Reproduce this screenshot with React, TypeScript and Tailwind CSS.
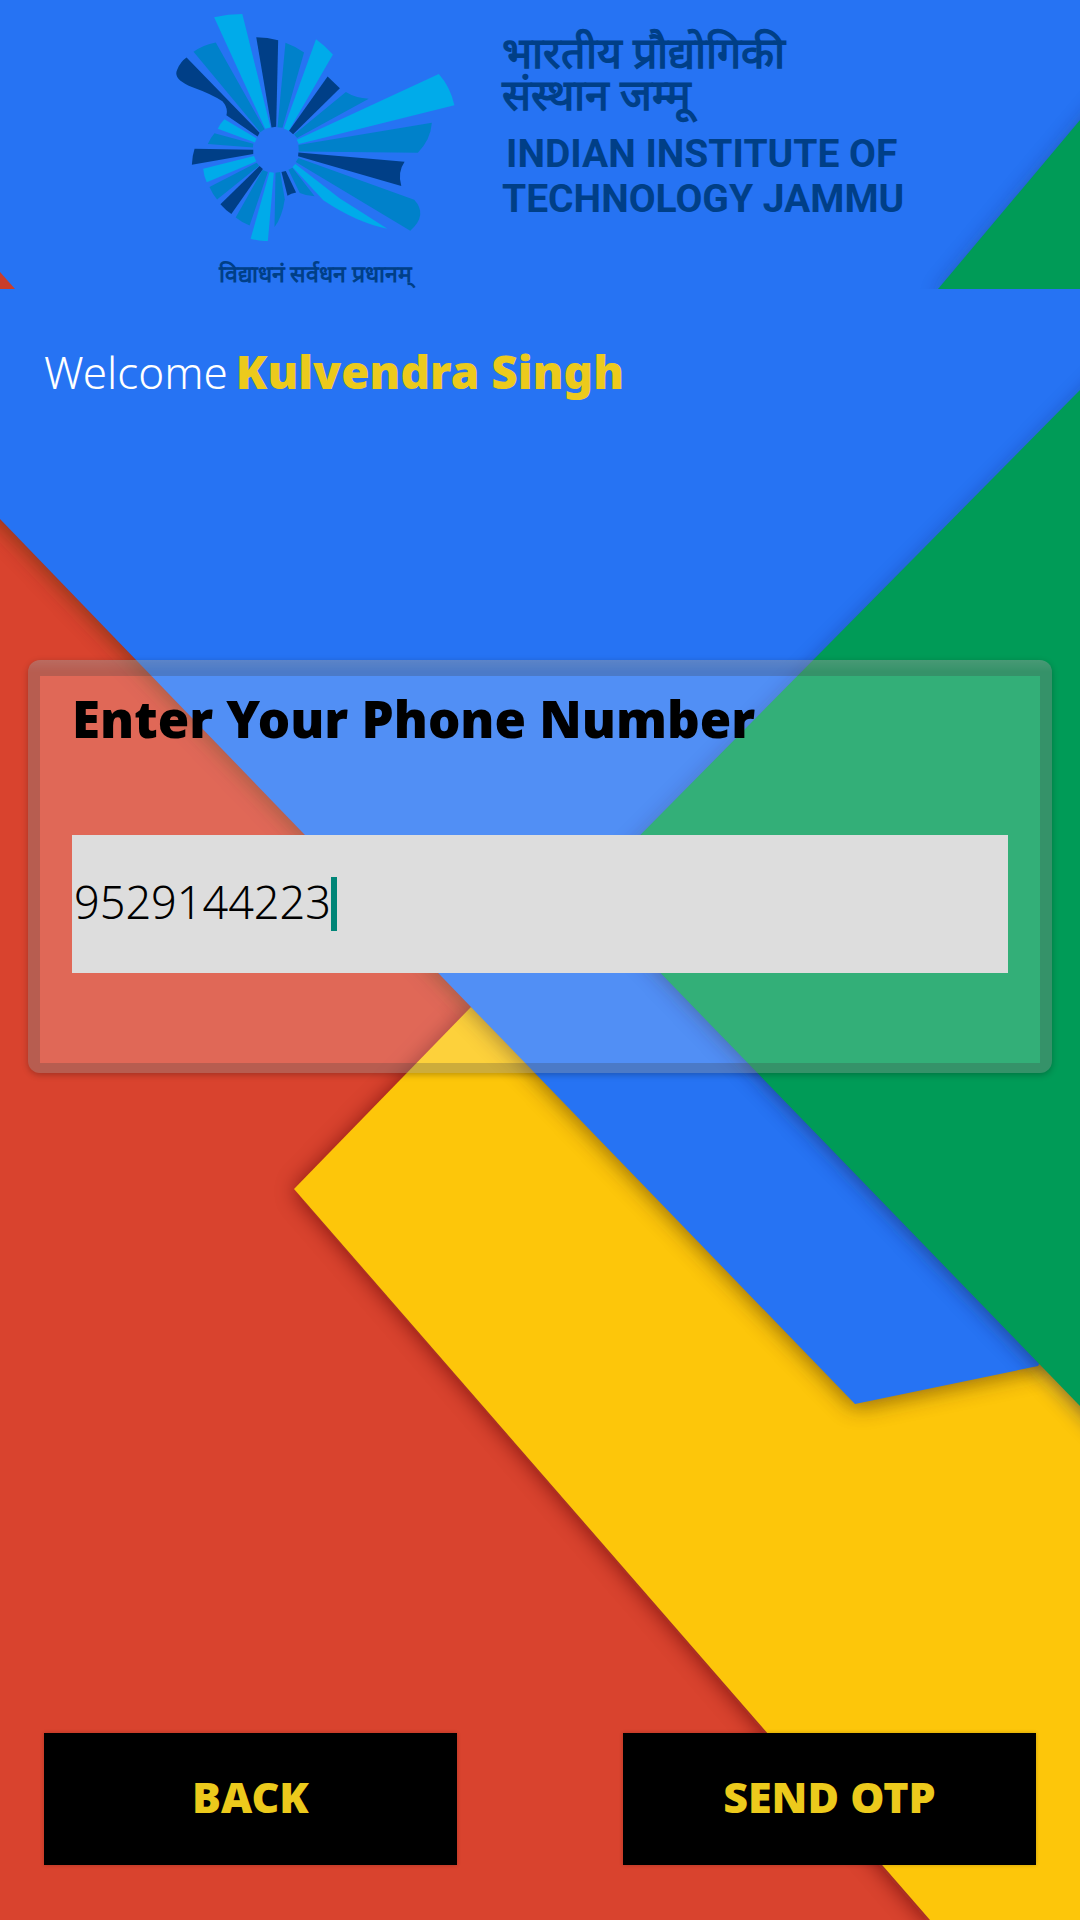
import React, { useState } from 'react';

function Wallpaper() {
  return (
    <svg
      aria-hidden="true"
      className="absolute inset-0 h-full w-full"
      viewBox="0 0 1080 1920"
      preserveAspectRatio="none"
    >
      <defs>
        <filter id="soft" x="-10%" y="-10%" width="120%" height="120%">
          <feGaussianBlur stdDeviation="11" />
        </filter>
      </defs>
      <rect width="1080" height="1920" fill="#d9432e" />
      <path d="M471 1009L294 1191L930 1924H1200V1100Z" fill="#5c0a10" opacity="0.7" filter="url(#soft)" />
      <path d="M471 1007L294 1189L930 1920H1080V1300Z" fill="#fdc60a" />
      <path d="M-60 460L855 1408L1045 1368V-60H-60Z" fill="#4a2a10" opacity="0.6" filter="url(#soft)" />
      <path d="M0 519L471 1007L855 1404L1038 1366L1080 1300V0H0Z" fill="#2673f3" />
      <path d="M1140 342L587 897L1140 1470Z" fill="#1c2350" opacity="0.65" filter="url(#soft)" />
      <path d="M1080 390L583 893L1080 1406Z" fill="#009b57" />
    </svg>
  );
}

function HeaderBackdrop() {
  return (
    <svg
      aria-hidden="true"
      className="absolute inset-0 h-full w-full"
      viewBox="0 0 1080 289"
      preserveAspectRatio="none"
    >
      <rect width="1080" height="289" fill="#2673f3" />
      <path d="M0 272L15 289H0Z" fill="#c93d2b" />
      <path d="M1140 56L936 299H1140Z" fill="#1c2350" opacity="0.45" filter="url(#soft)" />
      <path d="M1080 120L938 289H1080Z" fill="#009b57" />
    </svg>
  );
}

function Emblem() {
  return (
    <svg role="img" aria-label="IIT Jammu emblem" className="h-[228px] w-[279px]" viewBox="48 42 837 684">
      <g fill="#00abea">
        <path d="M161 52Q203 42 246 42L331 384L315 388Z" />
        <path d="M468 118Q496 138 519 164L386 394L371 387Z" />
        <path d="M838 223Q873 262 885 317L416 434L410 421Z" />
        <path d="M192 359L289 417L284 429L172 388Q179 372 192 359Z" />
        <path d="M128 508L281 470L288 486L139 549Q130 530 128 508Z" />
        <path d="M328 518L341 520L323 726Q298 727 271 719Z" />
        <path d="M397 503L406 494L540 598Q610 642 683 689Q590 670 490 603Z" />
      </g>
      <g fill="#0081ca">
        <path d="M99 156Q128 135 166 128L313 389L300 398Z" />
        <path d="M376 129Q406 140 432 158L367 385L352 383Z" />
        <path d="M558 277Q588 296 627 297L411 416L402 405Z" />
        <path d="M817 370Q814 420 775 460L416 456L415 437Z" />
        <path d="M162 401L279 433L278 444L142 434Q149 416 162 401Z" />
        <path d="M147 563L289 490L297 499L170 601Q156 584 147 563Z" />
        <path d="M307 512L323 518L268 679Q246 671 226 655Z" />
        <path d="M346 520L360 518L374 600Q366 654 343 684Z" />
        <path d="M385 511L397 505L464 591Q440 590 419 581Z" />
        <path d="M415 476L764 602Q806 648 752 695L407 488Z" />
      </g>
      <g fill="#003f87">
        <path d="M78 173L298 400L292 411L198 347Q204 325 186 305Q155 284 94 262Q35 238 50 209Q60 185 78 173Z" />
        <path d="M288 112Q322 112 354 121L348 382L334 384Z" />
        <path d="M503 230L540 266L399 404L387 394Z" />
        <path d="M415 459L735 487Q713 518 725 560L414 471Z" />
        <path d="M102 448L279 451L279 464L94 496Q95 469 102 448Z" />
        <path d="M298 500L308 509L213 645Q195 632 180 615Z" />
        <path d="M364 518L377 515L408 580Q393 583 382 590Z" />
      </g>
    </svg>
  );
}

export default function App() {
  const [phone, setPhone] = useState('9529144223');

  return (
    <main className="relative flex min-h-screen flex-col overflow-hidden font-['Noto_Sans',sans-serif]">
      <Wallpaper />

      <header className="relative flex h-[289px] justify-center gap-[47px] overflow-hidden font-['Roboto',sans-serif] text-[#003f87]">
        <HeaderBackdrop />
        <div className="relative flex flex-col items-center pt-[14px]">
          <Emblem />
          <p lang="hi" className="mt-5 text-[23px] leading-7 font-bold whitespace-nowrap">
            विद्याधनं सर्वधन प्रधानम्
          </p>
        </div>
        <div className="relative w-[402px] pt-8 font-bold whitespace-nowrap">
          <p lang="hi" className="text-[43px] leading-[42px]">
            भारतीय प्रौद्योगिकी
            <br />
            संस्थान जम्मू
          </p>
          <p className="mt-4 pl-1 text-[39px] leading-[45px]">INDIAN INSTITUTE OF</p>
          <p className="text-[39px] leading-[45px]">TECHNOLOGY JAMMU</p>
        </div>
      </header>

      <p className="relative mt-[52px] flex items-baseline gap-2 px-11 leading-[60px] whitespace-nowrap">
        <span className="text-[44px] font-[350] text-white">Welcome</span>
        <span className="text-[46px] font-black text-[#ecca1c]">Kulvendra Singh</span>
      </p>

      <section className="relative mx-7 mt-[258px] rounded-xl border-x-12 border-t-16 border-b-10 border-[#3b3b3b]/25 px-8 pt-3 pb-[90px] shadow-[0_2px_6px_rgba(0,0,0,0.25)] [background:linear-gradient(rgba(255,255,255,0.3)_0,rgba(255,255,255,0.2)_12px)_border-box]">
        <label htmlFor="phone" className="block text-[51px] leading-[60px] font-black text-black">
          Enter Your Phone Number
        </label>
        <div className="mt-[87px] flex h-[138px] items-center bg-[#dddddd]">
          <input
            id="phone"
            type="tel"
            value={phone}
            onChange={(e) => setPhone(e.target.value)}
            className="field-sizing-content bg-transparent pb-1 pl-[2px] text-[45px] leading-[60px] font-[350] text-black caret-transparent outline-none"
          />
          <span aria-hidden="true" className="h-[54px] w-[6px] bg-[#008577]" />
        </div>
      </section>

      <div className="relative mt-auto grid grid-cols-2 gap-[166px] px-11 pb-[55px]">
        <button type="button" className="h-[132px] bg-black pb-1 text-[43px] font-black text-[#ecca1c] shadow-[0_0_4px_rgba(0,0,0,0.2)]">
          BACK
        </button>
        <button type="button" className="h-[132px] bg-black pb-1 text-[43px] font-black text-[#ecca1c] shadow-[0_0_4px_rgba(0,0,0,0.2)]">
          SEND OTP
        </button>
      </div>
    </main>
  );
}
